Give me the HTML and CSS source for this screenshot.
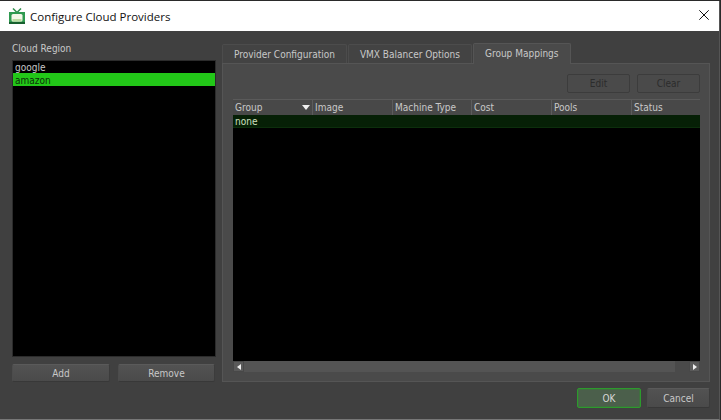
FILE: index.html
```html
<!DOCTYPE html>
<html lang="en">
<head>
<meta charset="utf-8">
<title>Configure Cloud Providers</title>
<link rel="stylesheet" href="styles.css">
</head>
<body>
<div class="dialog">
  <header class="titlebar">
    <svg class="app-icon" width="16" height="16" viewBox="0 0 16 16">
      <path d="M4 0.5l4 4 4-4" fill="none" stroke="#2f8f4b" stroke-width="1.5"/>
      <rect x="0" y="4" width="16" height="12" fill="#2f9a50"/>
      <rect x="0" y="14" width="16" height="2" fill="#17602f"/>
      <rect x="2.5" y="6" width="11" height="7.5" rx="1.5" fill="#f4f7e8"/>
      <rect x="3.5" y="11" width="9" height="2.5" fill="#bcdca2"/>
    </svg>
    <span class="title-text">Configure Cloud Providers</span>
    <svg class="close" width="10" height="10" viewBox="0 0 10 10">
      <path d="M0.3 0.3l9.4 9.4M9.7 0.3l-9.4 9.4" stroke="#111" stroke-width="1" fill="none"/>
    </svg>
  </header>
  <main class="body">
    <div class="content">
      <section class="left">
        <div class="label">Cloud Region</div>
        <ul class="region-list">
          <li>google</li>
          <li class="selected">amazon</li>
        </ul>
        <div class="left-buttons">
          <button class="btn add">Add</button>
          <button class="btn remove">Remove</button>
        </div>
      </section>
      <section class="right">
        <div class="tabs">
          <div class="tab">Provider Configuration</div>
          <div class="tab">VMX Balancer Options</div>
          <div class="tab active">Group Mappings</div>
        </div>
        <div class="panel">
          <div class="panel-buttons">
            <button class="btn small" disabled>Edit</button>
            <button class="btn small" disabled>Clear</button>
          </div>
          <div class="table">
            <div class="thead">
              <div class="th c-group">Group<span class="sort"></span></div>
              <div class="th c-image">Image</div>
              <div class="th c-type">Machine Type</div>
              <div class="th c-cost">Cost</div>
              <div class="th c-pools">Pools</div>
              <div class="th c-status">Status</div>
            </div>
            <div class="row">none</div>
            <div class="table-fill"></div>
            <div class="hscroll">
              <span class="arrow-btn"><span class="arrow left-arrow"></span></span>
              <span class="track"></span>
              <span class="stub"></span>
              <span class="arrow-btn"><span class="arrow right-arrow"></span></span>
            </div>
          </div>
        </div>
      </section>
    </div>
    <footer class="footer">
      <button class="btn primary">OK</button>
      <button class="btn">Cancel</button>
    </footer>
  </main>
</div>
</body>
</html>
```
FILE: styles.css
```css
* { box-sizing: border-box; }
html, body { margin: 0; padding: 0; }
body {
  width: 721px;
  height: 420px;
  overflow: hidden;
  background: #2a2a2a;
  font-family: "DejaVu Sans", sans-serif;
  font-stretch: condensed;
  font-size: 10px;
  color: #c8c8c8;
}
.dialog {
  width: 720px;
  height: 419px;
  margin-top: 1px;
  display: flex;
  flex-direction: column;
  background: #404040;
  border-right: 1px solid #555;
  border-bottom: 1px solid #777;
}
.titlebar {
  flex: 0 0 30px;
  background: #fff;
  display: flex;
  align-items: center;
  padding: 0 10px 0 9px;
  color: #111;
}
.app-icon { flex: none; margin-top: -1px; }
.title-text {
  margin-left: 5px;
  font-family: "Open Sans", sans-serif;
  font-stretch: normal;
  font-size: 11.5px;
  flex: 1;
}
.close { flex: none; margin-top: -2px; }
.body {
  flex: 1;
  display: flex;
  flex-direction: column;
  padding: 12px 9px 10px 12px;
  min-height: 0;
}
.content {
  display: flex;
  gap: 6px;
  height: 339px;
}
.left {
  width: 204px;
  display: flex;
  flex-direction: column;
}
.label { height: 17px; line-height: 11px; }
.region-list {
  list-style: none;
  margin: 0;
  padding: 0;
  flex: 1;
  background: #000;
  border: 1px solid #2b2b2b;
}
.region-list li {
  height: 12px;
  line-height: 13px;
  padding-left: 2px;
  color: #c8c8c8;
}
.region-list li.selected {
  height: 13px;
  line-height: 15px;
  background: #22c718;
  color: #0b2f08;
}
.left-buttons {
  display: flex;
  gap: 8px;
  margin-top: 7px;
}
.btn {
  width: 63px;
  height: 19px;
  padding: 0;
  font: inherit;
  color: #c8c8c8;
  background: linear-gradient(#525252, #4a4a4a);
  border: 1px solid #3a3a3a;
  border-color: #5a5a5a #3c3c3c #383838 #4c4c4c;
  border-radius: 2px;
}
.btn.add { width: 98px; height: 18px; }
.btn.remove { width: 97px; height: 18px; }
.btn:disabled { color: #2c2c2c; background: #4a4a4a; border-color: #3c3c3c; }
.btn.primary {
  width: 64px;
  border: 1px solid #2d9a2d;
  box-shadow: inset 0 0 0 1px #3f6f3f;
  background: #4b5f4b;
  color: #d8d8d8;
}
.right { flex: 1; display: flex; flex-direction: column; min-width: 0; }
.tabs { display: flex; height: 20px; gap: 1px; }
.tab {
  height: 19px;
  margin-top: 1px;
  padding: 0 11px;
  line-height: 19px;
  background: #434343;
  border: 1px solid #4c4c4c;
  border-bottom: 0;
  border-radius: 2px 2px 0 0;
  white-space: nowrap;
}
.tab.active {
  height: 21px;
  margin-top: 0;
  line-height: 19px;
  background: #4a4a4a;
  border-color: #555;
  position: relative;
  z-index: 1;
}
.panel {
  flex: 1;
  display: flex;
  flex-direction: column;
  background: #4a4a4a;
  border: 1px solid #555;
  padding: 10px 9px 9px 10px;
  min-height: 0;
}
.panel-buttons {
  display: flex;
  justify-content: flex-end;
  gap: 7px;
  height: 25px;
}
.table {
  flex: 1;
  display: flex;
  flex-direction: column;
  background: #000;
  min-height: 0;
}
.thead { display: flex; height: 16px; background: #484848; border-top: 1px solid #5a5a5a; }
.th {
  height: 15px;
  line-height: 15px;
  padding-left: 2px;
  border-right: 1px solid #5c5c5c;
  color: #c8c8c8;
  display: flex;
  justify-content: space-between;
  align-items: center;
}
.c-group { width: 80px; padding-right: 2px; }
.c-image { width: 80px; }
.c-type { width: 79px; }
.c-cost { width: 80px; }
.c-pools { width: 80px; }
.c-status { flex: 1; border-right: 0; }
.sort {
  width: 0; height: 0;
  border-left: 4px solid transparent;
  border-right: 4px solid transparent;
  border-top: 5px solid #eee;
}
.row {
  height: 13px;
  line-height: 13px;
  padding-left: 2px;
  background: #062006;
  border-bottom: 1px solid #0c2f0c;
  color: #d0e0c0;
}
.table-fill { flex: 1; }
.hscroll { display: flex; height: 11px; background: #545454; }
.arrow-btn {
  width: 11px;
  display: flex;
  align-items: center;
  justify-content: center;
  background: #5a5a5a;
  border: 1px solid #484848;
}
.track { flex: 1; }
.stub { width: 14px; background: #4a4a4a; }
.arrow { width: 0; height: 0; border-top: 3px solid transparent; border-bottom: 3px solid transparent; }
.left-arrow { border-right: 4px solid #eee; }
.right-arrow { border-left: 4px solid #eee; }
.footer {
  display: flex;
  justify-content: flex-end;
  gap: 6px;
  margin-top: 6px;
}
.footer .btn { height: 20px; }
```
